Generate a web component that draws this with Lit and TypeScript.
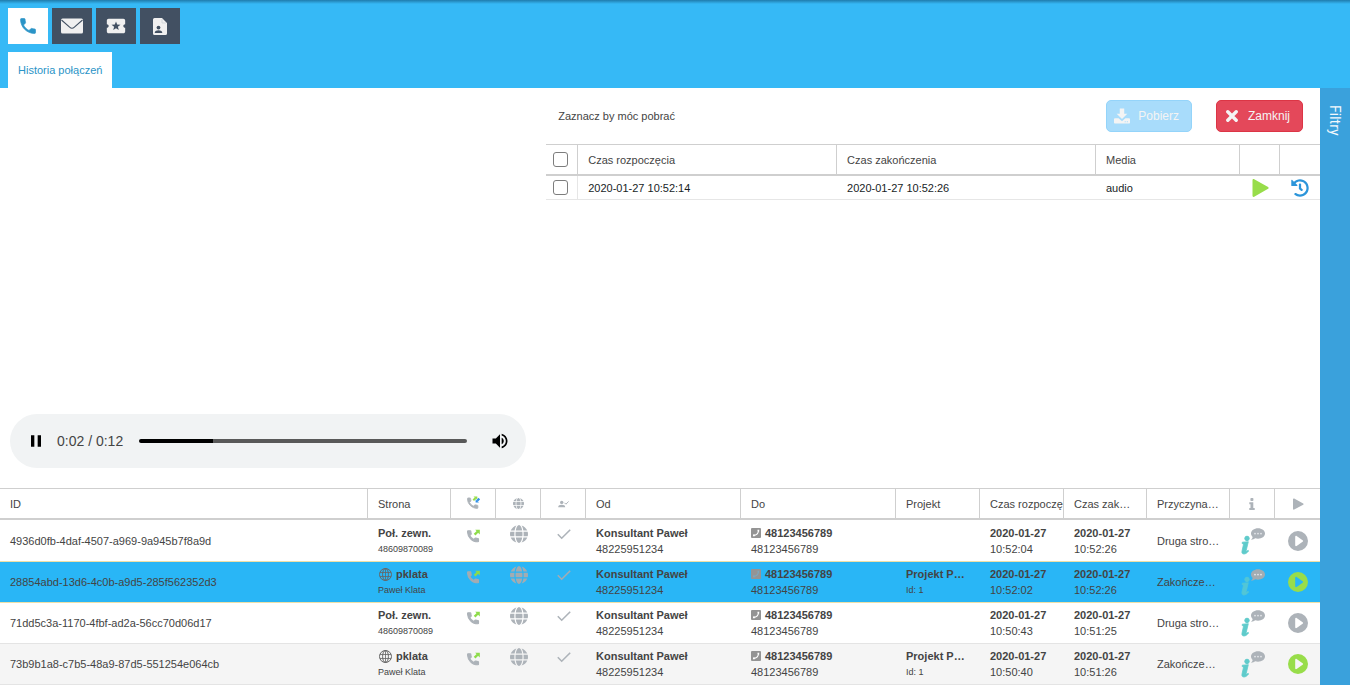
import { LitElement, html, css, svg, nothing, TemplateResult } from "lit";
import { customElement, property, state } from "lit/decorators.js";
import { classMap } from "lit/directives/class-map.js";

const PHONE =
  "M6.62 10.79c1.44 2.83 3.76 5.14 6.59 6.59l2.2-2.2c.27-.27.67-.36 1.02-.24 1.12.37 2.33.57 3.57.57.55 0 1 .45 1 1V20c0 .55-.45 1-1 1-9.39 0-17-7.61-17-17 0-.55.45-1 1-1h3.5c.55 0 1 .45 1 1 0 1.25.2 2.45.57 3.57.11.35.03.74-.25 1.02l-2.2 2.2z";
const GLOBE =
  "M336.5 160C322 70.7 287.8 8 248 8s-74 62.7-88.5 152h177zM152 256c0 22.2 1.2 43.5 3.3 64h185.3c2.1-20.5 3.3-41.8 3.3-64s-1.2-43.5-3.3-64H155.3c-2.1 20.5-3.3 41.8-3.3 64zm324.7-96c-28.6-67.9-86.5-120.4-158-141.6 24.4 33.8 41.2 84.7 50 141.6h108zM177.2 18.4C105.8 39.6 47.8 92.1 19.3 160h108c8.7-56.9 25.5-107.8 49.9-141.6zM487.4 192H372.7c2.1 21 3.3 42.5 3.3 64s-1.2 43-3.3 64h114.6c5.5-20.5 8.6-41.8 8.6-64s-3.1-43.5-8.5-64zM120 256c0-21.5 1.2-43 3.3-64H8.6C3.2 212.5 0 233.8 0 256s3.2 43.5 8.6 64h114.6c-2-21-3.2-42.5-3.2-64zm39.5 96c14.5 89.3 48.7 152 88.5 152s74-62.7 88.5-152h-177zm159.3 141.6c71.4-21.2 129.4-73.7 158-141.6h-108c-8.8 56.9-25.6 107.8-50 141.6zM19.3 352c28.6 67.9 86.5 120.4 158 141.6-24.4-33.8-41.2-84.7-50-141.6h-108z";
const HISTORY =
  "M504 255.531c.253 136.64-111.18 248.372-247.82 248.468-59.015.042-113.223-20.53-155.822-54.911-11.077-8.94-11.905-25.541-1.839-35.607l11.267-11.267c8.609-8.609 22.353-9.551 31.891-1.984C173.062 425.135 212.781 440 256 440c101.705 0 184-82.311 184-184 0-101.705-82.311-184-184-184-48.814 0-93.149 18.969-126.068 49.932l50.754 50.754c10.08 10.08 2.941 27.314-11.313 27.314H24c-8.837 0-16-7.163-16-16V38.627c0-14.254 17.234-21.393 27.314-11.314l49.372 49.372C129.209 34.136 189.552 8 256 8c136.81 0 247.747 110.78 248 247.531zm-180.912 78.784l9.823-12.63c8.138-10.463 6.253-25.542-4.21-33.679L288 256.349V152c0-13.255-10.745-24-24-24h-16c-13.255 0-24 10.745-24 24v135.651l65.409 50.874c10.463 8.137 25.541 6.253 33.679-4.21z";

const icon = (w: number, h: number, viewBox: string, body: unknown) => html`<svg
  width=${w}
  height=${h}
  viewBox=${viewBox}
  fill="currentColor"
  aria-hidden="true"
>${body}</svg>`;

const icons = {
  phone: () => icon(20, 20, "0 0 24 24", svg`<path d=${PHONE} stroke="currentColor" stroke-width=".8" />`),
  mail: () =>
    icon(22, 16, "0 0 22 16", svg`<rect y="0.5" width="22" height="15" rx="1.5" />
      <path d="M0.5 2 8.6 9.2Q11 11.3 13.4 9.2L21.5 2" fill="none" stroke="#425062" stroke-width="1.1" />`),
  ticket: () =>
    icon(22, 22, "0 0 24 24", svg`<path d="M20 12c0-1.1.9-2 2-2V6c0-1.1-.9-2-2-2H4c-1.1 0-2 .9-2 2v4c1.1 0 2 .9 2 2s-.9 2-2 2v4c0 1.1.9 2 2 2h16c1.1 0 2-.9 2-2v-4c-1.1 0-2-.9-2-2z" />
      <path d="M12 7l1.3 3.4 3.6.2-2.8 2.2.9 3.5-3-1.9-3 1.9.9-3.5-2.8-2.2 3.6-.2z" fill="#425062" />`),
  file: () =>
    icon(14, 17, "0 0 14 17", svg`<path d="M1.5 0H9l5 5v10.500a1.500 1.500 0 0 1-1.500 1.500h-11A1.500 1.500 0 0 1 0 15.500v-14A1.500 1.500 0 0 1 1.500 0z" />
      <circle cx="5.500" cy="9.600" r="1.900" fill="#425062" />
      <path d="M1.800 15v-.8c0-1.300 2.100-2 3.700-2s3.700.7 3.700 2v.8z" fill="#425062" />
      <path d="M9 1v4h4" fill="none" stroke="#c9ced3" stroke-width=".7" />`),
  download: () =>
    icon(16, 16, "0 0 18 17", svg`<path d="M6.500 0h5v6H15L9 12 3 6h3.500z" />
      <path fill-rule="evenodd" d="M1.200 11h4L9 14.400l3.800-3.400h4c.7 0 1.200.5 1.200 1.200v3.600c0 .7-.5 1.200-1.200 1.200H1.200C.5 17 0 16.500 0 15.800v-3.600c0-.7.5-1.200 1.200-1.200zM12 14.500v1h1.200v-1zm2.400 0v1h1.200v-1z" />`),
  close: () =>
    icon(12, 12, "0 0 12 12", svg`<path d="M1.800 1.800l8.400 8.400M10.200 1.800l-8.400 8.400" fill="none" stroke="currentColor" stroke-width="3.400" stroke-linecap="round" />`),
  play: () =>
    icon(17, 18, "0 0 17 18", svg`<path d="M.5 1.200C.5.200 1.400-.2 2.200.3l13.900 7.800c.7.400.7 1.300 0 1.700L2.200 17.700c-.8.500-1.700 0-1.700-1z" />`),
  playSmall: () =>
    icon(12, 12, "0 0 12 12", svg`<path d="M1 1.200C1 .5 1.600.2 2.200.5l9 4.900c.5.300.5 1 0 1.300l-9 4.900c-.6.300-1.200-.1-1.200-.7z" />`),
  history: () => icon(18, 18, "0 0 512 512", svg`<path d=${HISTORY} />`),
  pause: () => icon(20, 20, "0 0 24 24", svg`<path d="M6 19h4V5H6v14zm8-14v14h4V5h-4z" />`),
  volume: () =>
    icon(20, 20, "0 0 24 24", svg`<path d="M3 9v6h4l5 5V4L7 9H3zm13.500 3c0-1.770-1.020-3.290-2.500-4.030v8.050c1.480-.73 2.500-2.250 2.500-4.020zM14 3.230v2.060c2.890.86 5 3.540 5 6.710s-2.110 5.850-5 6.710v2.060c4.010-.91 7-4.490 7-8.770s-2.990-7.860-7-8.770z" />`),
  callBoth: () =>
    icon(13, 16, "0 0 13 16", svg`<path transform="translate(-1.300 .2) scale(.58)" d=${PHONE} stroke="currentColor" stroke-width="1.400" />
      <path d="M6.300 4.300 8.600 2" stroke="#98dd4a" stroke-width="2" />
      <path d="M6.500.5h3.800v3.200z" fill="#98dd4a" />
      <path d="M12.300 2.600 10.200 4.700" stroke="#2f8fe8" stroke-width="2.200" />
      <path d="M8.600 3.200v3.300H12z" fill="#2f8fe8" />`),
  callOut: () =>
    icon(14, 14, "0 0 14 14", svg`<path transform="translate(-1.300 0) scale(.61)" d=${PHONE} stroke="currentColor" stroke-width="1.800" />
      <path d="M7.600 5.700 10.800 2.500" stroke="#8edc4a" stroke-width="2.400" />
      <path d="M8.200.8h4.600v4.600z" fill="#8edc4a" />`),
  globe: (size: number) => icon(size, size, "0 8 496 496", svg`<path d=${GLOBE} />`),
  globeLine: () =>
    icon(14, 14, "0 0 14 14", svg`<g fill="none" stroke="#666"><circle cx="7.500" cy="7.500" r="6" /><ellipse cx="7.500" cy="7.500" rx="2.900" ry="6" /><path d="M2 5.500h11M2 9.500h11M7.500 1.500v12" stroke-width=".8" /></g>`),
  userCheck: () =>
    icon(11, 8, "0 0 11 8", svg`<circle cx="3.700" cy="2.400" r="1.700" /><path d="M.2 7.300c0-1.800 1.500-2.500 3.500-2.500s3.500.7 3.500 2.500z" /><path d="M6.500 2.800 7.900 4.200 10.600 1.500" fill="none" stroke="currentColor" />`),
  check: () =>
    icon(14, 12, "0 0 14 12", svg`<path d="M.8 6.300 4.700 10.200 13.200 1.700" fill="none" stroke="currentColor" stroke-width="1.600" />`),
  phoneSquare: () =>
    icon(10, 10, "0 0 10 10", svg`<rect width="10" height="10" rx="1" /><g class="cut"><path d="M7.400 2.200c.4 3-1.700 5.200-5 5.200" fill="none" stroke-width="1.200" /><path d="M6.500 1.800h1.700v1.700H6.700zM2 6.600h1.700l.1 1.600H2z" stroke="none" /></g>`),
  info: () =>
    icon(6, 12, "0 0 6 12", svg`<rect x="1.400" width="3" height="3" rx=".8" /><path d="M.3 4.300h4v5.600h1.400V12H.3V9.900h1.200V6.300H.3z" />`),
  infoChat: () =>
    icon(24, 27, "0 0 24 27", svg`<g class="mark"><circle cx="6" cy="10.400" r="2.200" /><path stroke-width=".8" stroke-linejoin="round" d="M1.300 14.200 7.300 13.700 5.200 22.500c-.2.900.5.900 1.200.3l.7-.6.500.8C6.200 24.800 4.600 26 2.900 26 1.200 26 .6 24.700 1 23.100L2.600 15.900l-1.400-.3z" /></g>
      <path d="M17 .3c3.900 0 7 2.300 7 5.200s-3.100 5.200-7 5.200c-1 0-1.900-.1-2.800-.4-1 .7-2.500 1.600-4.200 1.500.9-.9 1.500-1.900 1.700-2.900C10.600 8 10 6.800 10 5.500 10 2.600 13.100.3 17 .3z" />
      <g fill="#e4e7ea"><circle cx="14" cy="5.600" r=".9" /><circle cx="17" cy="5.600" r=".9" /><circle cx="20" cy="5.600" r=".9" /></g>`),
  playCircle: () =>
    icon(20, 20, "0 0 20 20", svg`<path fill-rule="evenodd" d="M10 0a10 10 0 1 0 0 20 10 10 0 0 0 0-20zM7.200 5.800c0-.8.700-1.200 1.400-.8l6 4.200c.6.400.6 1.200 0 1.600l-6 4.200c-.7.400-1.400 0-1.400-.8z" />`),
};

const controls = css`
  * {
    box-sizing: border-box;
  }
  svg {
    display: block;
    flex: none;
  }
  button {
    display: flex;
    align-items: center;
    justify-content: center;
    margin: 0;
    padding: 0;
    border: 0;
    background: none;
    color: inherit;
    font: inherit;
    cursor: pointer;
  }
  table {
    width: 100%;
    table-layout: fixed;
    border-collapse: separate;
    border-spacing: 0;
  }
  th {
    height: 32px;
    padding: 0 0 0 10px;
    border-top: 1px solid #cfcfcf;
    border-right: 1px solid #cfcfcf;
    border-bottom: 2px solid #cfcfcf;
    font-weight: normal;
    text-align: left;
    white-space: nowrap;
  }
  th:last-child {
    border-right: 0;
  }
`;

@customElement("audio-player")
class AudioPlayer extends LitElement {
  @property({ type: Number }) position = 2.7;
  @property({ type: Number }) duration = 12;

  static styles = [
    controls,
    css`
      :host {
        display: flex;
        align-items: center;
        height: 54px;
        padding: 0 16px;
        border-radius: 27px;
        background: #f1f3f4;
        color: #000;
      }
      .time {
        margin: 0 16px 0 11px;
        font-size: 14px;
        line-height: 16px;
        color: #444;
        white-space: nowrap;
      }
      .seek {
        appearance: none;
        flex: 1;
        min-width: 0;
        height: 4px;
        margin: 0 23px 0 0;
        border-radius: 2px;
      }
      .seek::-webkit-slider-thumb {
        appearance: none;
        width: 4px;
        height: 4px;
      }
    `,
  ];

  private clock(seconds: number) {
    return `${Math.floor(seconds / 60)}:${String(Math.floor(seconds % 60)).padStart(2, "0")}`;
  }

  render() {
    const done = (this.position / this.duration) * 100;
    return html`
      <button aria-label="Pauza">${icons.pause()}</button>
      <span class="time">${this.clock(this.position)} / ${this.clock(this.duration)}</span>
      <input
        class="seek"
        type="range"
        min="0"
        step="0.1"
        aria-label="Pozycja"
        max=${this.duration}
        .value=${String(this.position)}
        @input=${(e: Event) => (this.position = Number((e.target as HTMLInputElement).value))}
        style="background: linear-gradient(to right, #000 ${done}%, #595959 ${done}%)"
      />
      <button aria-label="Głośność">${icons.volume()}</button>
    `;
  }
}

@customElement("recordings-panel")
class RecordingsPanel extends LitElement {
  static styles = [
    controls,
    css`
      :host {
        display: block;
      }
      .toolbar {
        display: flex;
        align-items: center;
        gap: 24px;
        height: 56px;
        padding: 0 17px 0 12px;
      }
      .hint {
        flex: 1;
      }
      .button {
        height: 32px;
        padding: 0 12px 0 7px;
        gap: 8px;
        border: 1px solid;
        border-radius: 5px;
        font-size: 12px;
        color: #f4f4f4;
      }
      .fetch {
        background: #a8dcfb;
        border-color: #94d4fa;
        cursor: default;
      }
      .close {
        padding: 0 12px 0 9px;
        gap: 10px;
        background: #e4485a;
        border-color: #dc3545;
      }
      .c-pick {
        width: 32px;
      }
      .c-media {
        width: 144px;
      }
      .c-action {
        width: 40px;
      }
      .pick {
        padding: 0 0 0 7px;
      }
      .pick input {
        appearance: none;
        display: block;
        width: 15px;
        height: 15px;
        margin: 0;
        border: 1px solid #7d7d7d;
        border-radius: 3px;
        background: #fff;
      }
      td {
        height: 24px;
        padding: 0 0 0 10px;
        border-bottom: 1px solid #e6e6e6;
        color: #181d1f;
      }
      td.pick {
        padding-left: 7px;
        border-right: 1px solid #e6e6e6;
      }
      td.action {
        padding: 0;
      }
      .action button {
        width: 100%;
      }
      .play {
        color: #98dd4a;
      }
      .log {
        color: #2c95da;
      }
    `,
  ];

  render() {
    return html`
      <div class="toolbar">
        <span class="hint">Zaznacz by móc pobrać</span>
        <button class="button fetch" disabled>${icons.download()}Pobierz</button>
        <button class="button close">${icons.close()}Zamknij</button>
      </div>
      <table>
        <colgroup>
          <col class="c-pick" />
          <col />
          <col />
          <col class="c-media" />
          <col class="c-action" />
          <col class="c-action" />
        </colgroup>
        <thead>
          <tr>
            <th class="pick"><input type="checkbox" aria-label="Zaznacz wszystkie" /></th>
            <th>Czas rozpoczęcia</th>
            <th>Czas zakończenia</th>
            <th>Media</th>
            <th></th>
            <th></th>
          </tr>
        </thead>
        <tbody>
          <tr>
            <td class="pick"><input type="checkbox" aria-label="Zaznacz nagranie" /></td>
            <td>2020-01-27 10:52:14</td>
            <td>2020-01-27 10:52:26</td>
            <td>audio</td>
            <td class="action play"><button aria-label="Odtwórz">${icons.play()}</button></td>
            <td class="action log"><button aria-label="Historia">${icons.history()}</button></td>
          </tr>
        </tbody>
      </table>
    `;
  }
}

interface Call {
  id: string;
  internal: boolean;
  date: string;
  start: string;
  end: string;
  reason: string;
}

const CALLS: Call[] = [
  { id: "4936d0fb-4daf-4507-a969-9a945b7f8a9d", internal: false, date: "2020-01-27", start: "10:52:04", end: "10:52:26", reason: "Druga stro…" },
  { id: "28854abd-13d6-4c0b-a9d5-285f562352d3", internal: true, date: "2020-01-27", start: "10:52:02", end: "10:52:26", reason: "Zakończe…" },
  { id: "71dd5c3a-1170-4fbf-ad2a-56cc70d06d17", internal: false, date: "2020-01-27", start: "10:50:43", end: "10:51:25", reason: "Druga stro…" },
  { id: "73b9b1a8-c7b5-48a9-87d5-551254e064cb", internal: true, date: "2020-01-27", start: "10:50:40", end: "10:51:26", reason: "Zakończe…" },
];

@customElement("calls-table")
class CallsTable extends LitElement {
  @state() selected = 1;

  static styles = [
    controls,
    css`
      :host {
        display: block;
      }
      .c-83 {
        width: 83px;
      }
      .c-84 {
        width: 84px;
      }
      .c-icon {
        width: 45px;
      }
      .c-party {
        width: 155px;
      }
      th.symbol {
        padding: 0;
      }
      .symbol svg {
        margin: 0 auto;
      }
      .symbol {
        color: #adb3b9;
      }
      tbody tr:nth-child(even) {
        background: #f5f5f5;
      }
      td {
        height: 41px;
        padding: 0 0 0 10px;
        border-top: 1px solid #e4e4e4;
        line-height: 16px;
        white-space: nowrap;
        overflow: hidden;
      }
      tr:first-child td {
        border-top-color: transparent;
      }
      tr:last-child td {
        height: 42px;
        border-bottom: 1px solid #e4e4e4;
      }
      tbody tr.selected {
        background: #29b6f6;
      }
      .selected td,
      .selected + tr td {
        border-top-color: #eee0a8;
      }
      td.symbol {
        padding: 0;
      }
      td.raised {
        padding-bottom: 15px;
      }
      td.lifted {
        padding-bottom: 10px;
      }
      .line {
        display: flex;
        align-items: center;
        gap: 4px;
        font-weight: bold;
      }
      .small {
        font-size: 9px;
      }
      .muted {
        color: #949494;
      }
      .cut {
        fill: #fff;
        stroke: #fff;
      }
      .selected .cut {
        fill: #7ea6bb;
        stroke: #7ea6bb;
      }
      .mark {
        fill: #5fcbcb;
        stroke: #5fcbcb;
      }
      .selected .symbol {
        color: #a3acb2;
      }
      .selected .mark {
        fill: #52c6d6;
        stroke: #52c6d6;
      }
      .symbol.ready,
      .selected .symbol.ready {
        color: #98dd4a;
      }
      td button {
        width: 100%;
      }
    `,
  ];

  private pair(top: unknown, bottom: string, small = false): TemplateResult {
    return html`<div class="line">${top}</div>
      <div class=${small ? "small" : ""}>${bottom}</div>`;
  }

  private row(call: Call, index: number) {
    return html`<tr
      class=${classMap({ selected: index === this.selected })}
      @click=${() => (this.selected = index)}
    >
      <td>${call.id}</td>
      <td>
        ${call.internal
          ? this.pair(html`${icons.globeLine()}pklata`, "Paweł Klata", true)
          : this.pair("Poł. zewn.", "48609870089", true)}
      </td>
      <td class="symbol lifted">${icons.callOut()}</td>
      <td class="symbol raised">${icons.globe(18)}</td>
      <td class="symbol raised">${icons.check()}</td>
      <td>${this.pair("Konsultant Paweł", "48225951234")}</td>
      <td>${this.pair(html`<span class="muted">${icons.phoneSquare()}</span>48123456789`, "48123456789")}</td>
      <td>${call.internal ? this.pair("Projekt P…", "Id: 1", true) : nothing}</td>
      <td>${this.pair(call.date, call.start)}</td>
      <td>${this.pair(call.date, call.end)}</td>
      <td>${call.reason}</td>
      <td class="symbol">${icons.infoChat()}</td>
      <td class=${classMap({ symbol: true, ready: call.internal })}>
        <button aria-label="Odtwórz">${icons.playCircle()}</button>
      </td>
    </tr>`;
  }

  render() {
    return html`<table>
      <colgroup>
        <col />
        <col class="c-83" />
        <col class="c-icon" />
        <col class="c-icon" />
        <col class="c-icon" />
        <col class="c-party" />
        <col class="c-party" />
        <col class="c-84" />
        <col class="c-84" />
        <col class="c-83" />
        <col class="c-83" />
        <col class="c-icon" />
        <col class="c-icon" />
      </colgroup>
      <thead>
        <tr>
          <th>ID</th>
          <th>Strona</th>
          <th class="symbol">${icons.callBoth()}</th>
          <th class="symbol">${icons.globe(11)}</th>
          <th class="symbol">${icons.userCheck()}</th>
          <th>Od</th>
          <th>Do</th>
          <th>Projekt</th>
          <th>Czas rozpoczę</th>
          <th>Czas zak…</th>
          <th>Przyczyna…</th>
          <th class="symbol">${icons.info()}</th>
          <th class="symbol">${icons.playSmall()}</th>
        </tr>
      </thead>
      <tbody>
        ${CALLS.map((call, index) => this.row(call, index))}
      </tbody>
    </table>`;
  }
}

@customElement("app-root")
class AppRoot extends LitElement {
  static styles = [
    controls,
    css`
      :host {
        display: flex;
        flex-direction: column;
        min-height: 100vh;
        background: #fff;
        color: #444;
        font: 11px/14px "Liberation Sans", Arial, sans-serif;
      }
      header {
        padding: 8px 8px 0;
        background: linear-gradient(rgba(0, 40, 70, 0.42), rgba(0, 40, 70, 0) 4px) #36b9f6;
      }
      nav {
        display: flex;
        gap: 4px;
      }
      .module {
        width: 40px;
        height: 36px;
        background: #425062;
        color: #f0f0f0;
      }
      .module.active {
        background: #fff;
        color: #2a94c7;
      }
      .tabs {
        display: flex;
        margin-top: 8px;
      }
      .tab {
        height: 36px;
        padding: 0 10px;
        background: #fff;
        color: #2a94c7;
      }
      .body {
        display: flex;
        flex: 1;
      }
      main {
        flex: 1;
        min-width: 0;
      }
      .upper {
        display: grid;
        grid-template-columns: 12fr 17fr;
        min-height: 400px;
      }
      .media {
        display: flex;
        flex-direction: column;
        justify-content: flex-end;
        padding: 10px 20px 20px 10px;
      }
      .filters {
        width: 30px;
        padding-top: 17px;
        align-items: flex-start;
        background: #3aa1dc;
        color: #f4f9fc;
      }
      .filters span {
        writing-mode: vertical-rl;
        font: 14px/20px Roboto, sans-serif;
      }
    `,
  ];

  render() {
    return html`
      <header>
        <nav>
          <button class="module active" aria-label="Połączenia">${icons.phone()}</button>
          <button class="module" aria-label="Wiadomości">${icons.mail()}</button>
          <button class="module" aria-label="Zgłoszenia">${icons.ticket()}</button>
          <button class="module" aria-label="Kontakty">${icons.file()}</button>
        </nav>
        <div class="tabs"><button class="tab">Historia połączeń</button></div>
      </header>
      <div class="body">
        <main>
          <section class="upper">
            <div class="media"><audio-player></audio-player></div>
            <recordings-panel></recordings-panel>
          </section>
          <calls-table></calls-table>
        </main>
        <button class="filters"><span>Filtry</span></button>
      </div>
    `;
  }
}
